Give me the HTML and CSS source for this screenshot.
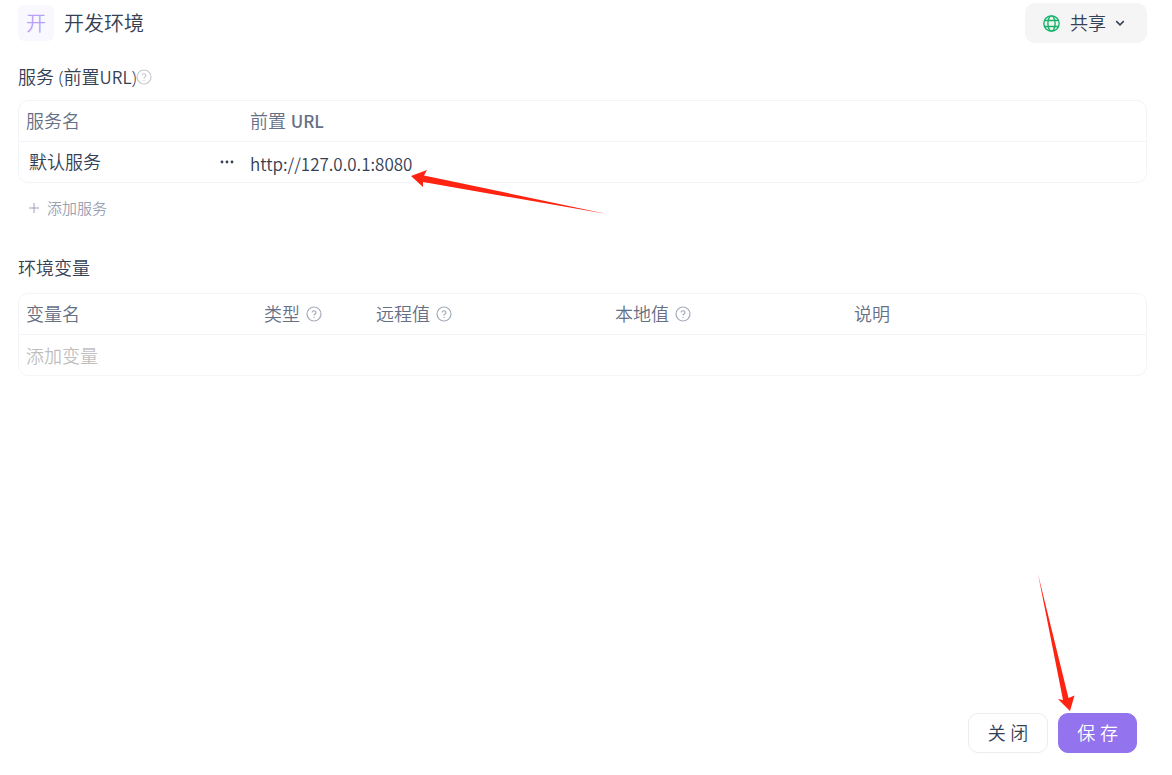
FILE: index.html
```html
<!DOCTYPE html>
<html lang="zh-CN">

<head>
  <meta charset="UTF-8">
  <meta name="viewport" content="width=device-width, initial-scale=1.0">
  <title>开发环境</title>
  <link rel="stylesheet" href="styles.css">
</head>

<body>
  <svg class="defs" width="0" height="0" aria-hidden="true">
    <symbol id="help" viewBox="0 0 16 16">
      <circle cx="8" cy="8" r="7" />
      <path d="M6.1 6.6a1.9 1.8 0 1 1 2.9 1.5c-.7.4-1 .7-1 1.3" />
      <path d="M8 11.1v1" />
    </symbol>
  </svg>

  <header class="header">
    <div class="env">
      <span class="env-icon">开</span>
      <h1 class="env-name">开发环境</h1>
    </div>
    <button class="share" type="button">
      <svg class="globe" viewBox="0 0 16 16" aria-hidden="true">
        <circle cx="8" cy="8" r="7.2" />
        <ellipse cx="8" cy="8" rx="3.4" ry="7.2" />
        <path d="M1.6 5.2h12.8M1.6 10.8h12.8" />
      </svg>
      <span>共享</span>
      <svg class="chevron" viewBox="0 0 8 8" aria-hidden="true">
        <path d="M1 2.5l3 3 3-3" />
      </svg>
    </button>
  </header>

  <main class="main">
    <section class="section">
      <div class="title">
        <h2>服务 (前置<span class="latin">URL</span>)</h2>
        <svg class="help help-light"><use href="#help" /></svg>
      </div>
      <div class="panel">
        <table class="table">
          <colgroup>
            <col class="col-service">
            <col>
          </colgroup>
          <thead>
            <tr>
              <th>服务名</th>
              <th>前置 <b class="latin">URL</b></th>
            </tr>
          </thead>
          <tbody>
            <tr>
              <td>
                <div class="service">
                  <span>默认服务</span>
                  <button class="more" type="button" aria-label="更多">
                    <svg viewBox="0 0 14 4" aria-hidden="true">
                      <circle cx="2" cy="2" r="1.4" />
                      <circle cx="7" cy="2" r="1.4" />
                      <circle cx="12" cy="2" r="1.4" />
                    </svg>
                  </button>
                </div>
              </td>
              <td class="url">
                <input class="input latin" type="text" value="http://127.0.0.1:8080" aria-label="前置 URL">
                <svg class="arrow arrow-url" viewBox="0 0 196 44" aria-hidden="true">
                  <path d="M0 6L16 0l-3 5.500L196 44 12 12l0 5z" />
                </svg>
              </td>
            </tr>
          </tbody>
        </table>
      </div>
      <button class="add" type="button">
        <svg viewBox="0 0 12 12" aria-hidden="true">
          <path d="M6 1v10M1 6h10" />
        </svg>
        <span>添加服务</span>
      </button>
    </section>

    <section class="section">
      <div class="title">
        <h2>环境变量</h2>
      </div>
      <div class="panel">
        <table class="table">
          <colgroup>
            <col class="col-name">
            <col class="col-type">
            <col class="col-value">
            <col class="col-value">
            <col>
          </colgroup>
          <thead>
            <tr>
              <th>变量名</th>
              <th><span class="label">类型<svg class="help"><use href="#help" /></svg></span></th>
              <th><span class="label">远程值<svg class="help"><use href="#help" /></svg></span></th>
              <th><span class="label">本地值<svg class="help"><use href="#help" /></svg></span></th>
              <th>说明</th>
            </tr>
          </thead>
          <tbody>
            <tr>
              <td colspan="5"><input class="input" type="text" placeholder="添加变量" aria-label="变量名"></td>
            </tr>
          </tbody>
        </table>
      </div>
    </section>
  </main>

  <footer class="footer">
    <button class="btn" type="button">关 闭</button>
    <div class="save">
      <button class="btn btn-primary" type="button">保 存</button>
      <svg class="arrow arrow-save" viewBox="0 0 38 138" aria-hidden="true">
        <path d="M0 0L30.500 124l6-2.500L32 137 20 125l5 1z" />
      </svg>
    </div>
  </footer>
</body>

</html>
```
FILE: styles.css
```css
* {
  box-sizing: border-box;
  margin: 0;
  padding: 0;
}

body {
  display: flex;
  flex-direction: column;
  min-height: 100vh;
  background-color: #fff;
  color: #344054;
  font-family: "Open Sans", "Noto Sans CJK SC", sans-serif;
  font-size: 18px;
  font-weight: 350;
  line-height: 24px;
}

button,
input {
  border: 0;
  background: none;
  color: inherit;
  font: inherit;
}

button {
  cursor: pointer;
}

svg {
  flex: none;
  fill: none;
  stroke: currentColor;
}

.defs {
  position: absolute;
}

.latin {
  font-family: "Noto Sans CJK SC", sans-serif;
  font-size: 17px;
}

/* header */
.header {
  display: flex;
  align-items: center;
  justify-content: space-between;
  padding: 3px 25px 0 18px;
}

.env {
  display: flex;
  align-items: center;
  gap: 10px;
}

.env-icon,
.env-name {
  height: 36px;
  font-size: 20px;
  font-weight: 350;
  line-height: 38px;
}

.env-icon {
  width: 36px;
  border-radius: 6px;
  background-color: #faf8ff;
  color: #b9a1f8;
  text-align: center;
}

.share {
  display: flex;
  align-items: center;
  height: 40px;
  padding: 0 22px 0 18px;
  border-radius: 10px;
  background-color: #f5f5f5;
}

.globe {
  width: 17px;
  height: 17px;
  margin-right: 10px;
  color: #17b26a;
  stroke-width: 1.3;
}

.chevron {
  width: 10px;
  height: 10px;
  margin-left: 9px;
  stroke-width: 1.2;
}

/* sections */
.main {
  padding: 22px 25px 22px 18px;
}

.section + .section {
  margin-top: 36px;
}

.title {
  display: flex;
  align-items: center;
  height: 24px;
  margin-bottom: 11px;
}

.title h2 {
  font-size: 18px;
  font-weight: 350;
}

.section + .section .title {
  margin-bottom: 13px;
}

.help {
  width: 16px;
  height: 16px;
  color: #a4abb9;
  stroke-width: 1.2;
}

.help-light {
  color: #c6cad1;
}

.panel {
  border: 1px solid #f2f4f7;
  border-radius: 10px;
}

.table {
  width: 100%;
  border-spacing: 0;
  table-layout: fixed;
}

.table th,
.table td {
  height: 40px;
  padding: 0 7px;
  font-weight: 350;
  text-align: left;
}

.table th {
  height: 41px;
  border-bottom: 1px solid #f2f4f7;
  color: #667085;
}

.table b {
  font-weight: 500;
}

.col-service {
  width: 224px;
}

.col-name {
  width: 238px;
}

.col-type {
  width: 112px;
}

.col-value {
  width: 239px;
}

.label {
  display: flex;
  align-items: center;
  gap: 6px;
}

.service {
  display: flex;
  align-items: center;
  justify-content: space-between;
  padding-left: 3px;
}

.more {
  display: flex;
  padding: 4px 2px;
}

.more svg {
  width: 14px;
  height: 4px;
  fill: currentColor;
  stroke: none;
}

.input {
  display: block;
  width: 100%;
  height: 26px;
  padding-top: 2px;
  outline: 0;
}

.url {
  position: relative;
}

.input::placeholder {
  color: #bfbfbf;
  opacity: 1;
}

.url .input {
  font-size: 17px;
}

.add {
  display: flex;
  align-items: center;
  gap: 7px;
  margin-top: 13px;
  padding-left: 10px;
  color: #98a2b3;
  font-size: 15px;
}

.add svg {
  width: 12px;
  height: 12px;
}

/* footer */
.footer {
  display: flex;
  justify-content: flex-end;
  gap: 10px;
  margin-top: auto;
  padding: 0 35px 22px;
}

.btn {
  height: 40px;
  padding: 0 19px;
  border: 1px solid #eaecf0;
  border-radius: 10px;
}

.btn-primary {
  padding: 0 18px;
  border-color: #9373ee;
  background-color: #9373ee;
  color: #fff;
}

.save {
  position: relative;
}

/* pointers drawn over the page */
.arrow {
  position: absolute;
  fill: #ff2312;
  stroke: none;
  pointer-events: none;
}

.arrow-url {
  top: 28px;
  left: 168px;
  width: 196px;
  height: 44px;
}

.arrow-save {
  bottom: 41px;
  left: -20px;
  width: 38px;
  height: 138px;
}
```
